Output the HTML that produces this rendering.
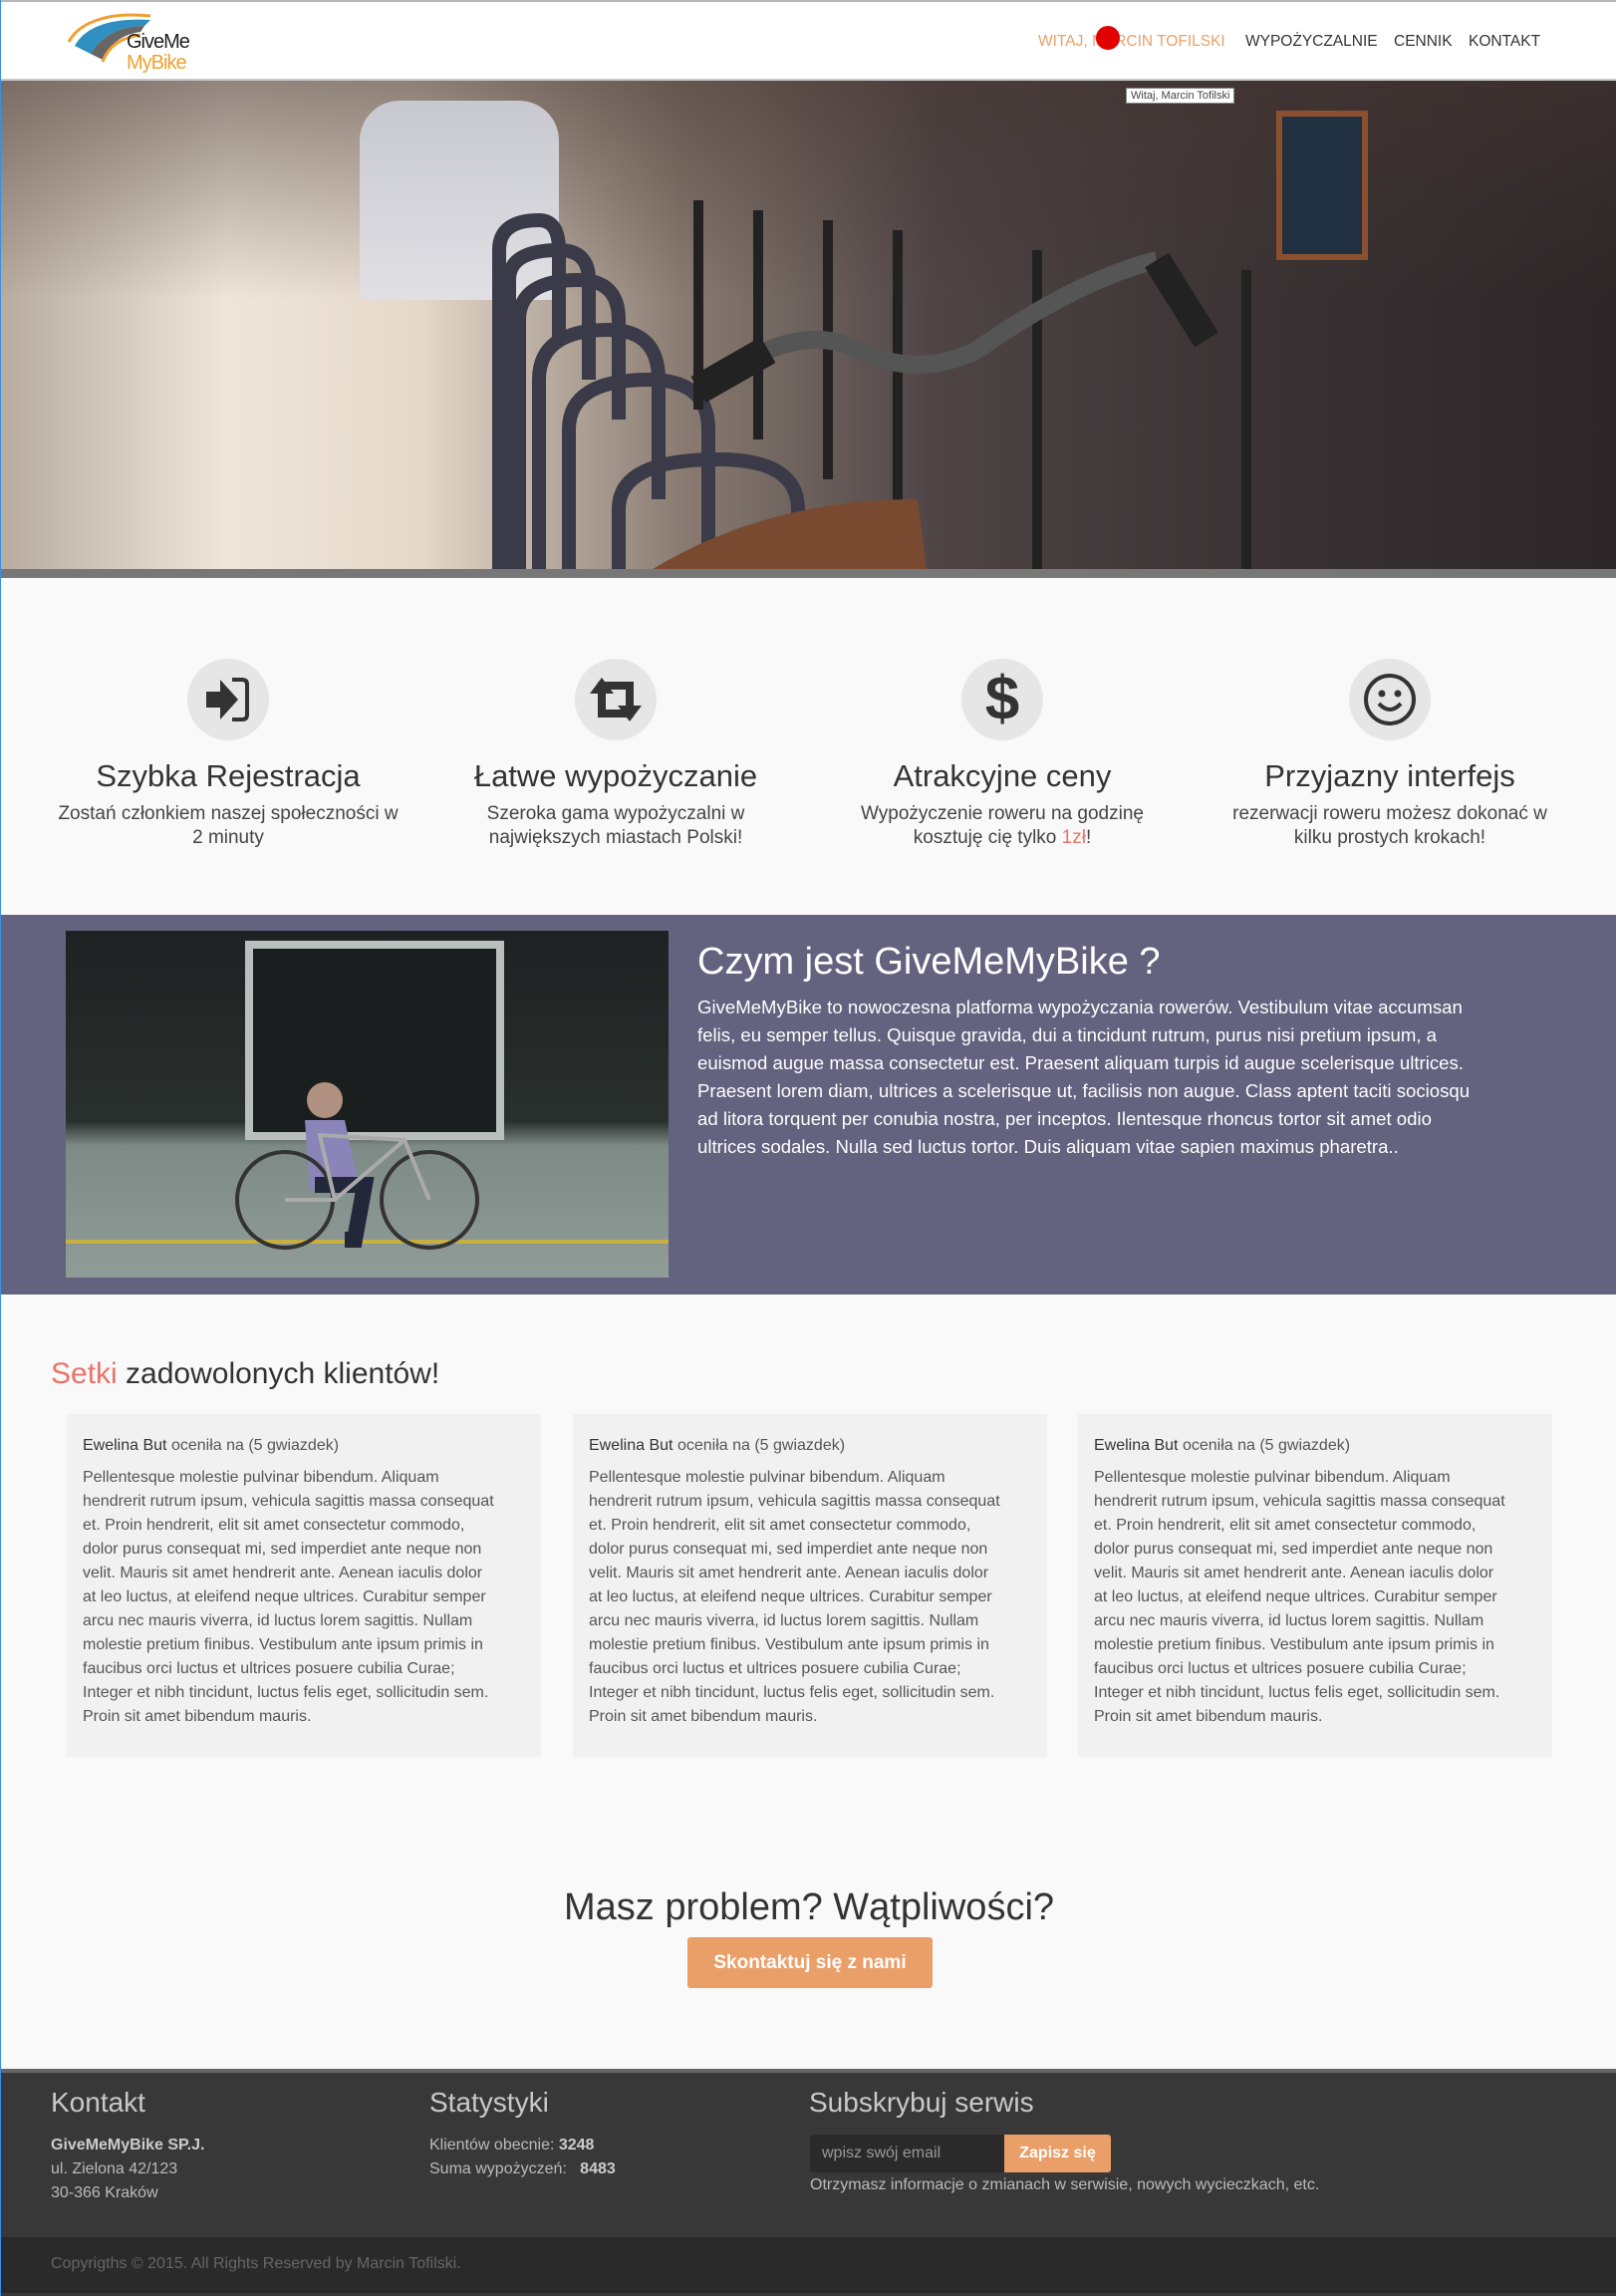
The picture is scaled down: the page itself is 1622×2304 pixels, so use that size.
<!DOCTYPE html>
<html><head><meta charset="utf-8">
<style>
*{margin:0;padding:0;box-sizing:border-box}
html,body{width:1622px;height:2304px;overflow:hidden}
body{background:#f9f9f9;font-family:"Liberation Sans",sans-serif;color:#333;position:relative;border-left:1px solid #3a8ee6}
.abs{position:absolute}
.nw{white-space:nowrap}
#hdr{left:0;top:0;width:1622px;height:81px;background:#fff;border-top:2px solid #b8b8b8;border-bottom:2px solid #c8c8c8}
.nav{top:31px;font-size:15.5px;color:#333;white-space:nowrap}
.feat{width:380px;text-align:center}
.feat h3{font-weight:normal;font-size:31px;color:#333;margin-bottom:8px}
.feat p{font-size:19px;line-height:24px;color:#444}
.circ{width:82px;height:82px;border-radius:50%;background:#e6e6e6}
.card{top:1419px;width:476px;height:344px;background:#f1f1f1;padding:20px 16px;font-size:16px;color:#555;line-height:24px;white-space:nowrap}
.card b{font-weight:normal;color:#333}
.fh{top:2094px;font-size:28px;color:#c9c9c9;font-weight:normal}
.ft{font-size:16px;line-height:24px;color:#bbb;white-space:nowrap}
</style></head><body>

<div id="hdr" class="abs">
  <svg class="abs" style="left:64px;top:6px" width="130" height="68" viewBox="0 0 130 68">
    <path d="M4 34 C16 12 48 4 86 8" stroke="#f0a030" stroke-width="3" fill="none"/>
    <path d="M10 38 C22 16 52 10 86 12 L80 18 C58 18 38 26 26 46 Z" fill="#2e8fc0"/>
    <path d="M26 46 C38 26 58 18 80 18 L76 24 C60 26 46 34 38 52 Z" fill="#666"/>
    <path d="M38 54 C44 38 56 30 76 27" stroke="#f0a030" stroke-width="3" fill="none"/>
    <text x="62" y="40" font-family="Liberation Sans" font-size="20" fill="#222" letter-spacing="-1">GiveMe</text>
    <text x="62" y="61" font-family="Liberation Sans" font-size="20" fill="#f0a030" letter-spacing="-1">MyBike</text>
  </svg>
  <div class="abs nav" style="left:1041px;color:#eb9f68">WITAJ, MARCIN TOFILSKI</div>
  <div class="abs" style="left:1099px;top:24px;width:24px;height:24px;border-radius:50%;background:#e00000"></div>
  <div class="abs nav" style="left:1249px">WYPOŻYCZALNIE</div>
  <div class="abs nav" style="left:1398px">CENNIK</div>
  <div class="abs nav" style="left:1473px">KONTAKT</div>
</div>

<!-- hero -->
<div class="abs" style="left:0;top:81px;width:1622px;height:499px;overflow:hidden;background:linear-gradient(90deg,#b8aca0 0%,#efe6da 14%,#e4d8ca 26%,#8a7c72 42%,#4e4446 58%,#3a3234 78%,#2c2628 100%)">
  <div class="abs" style="left:0;top:0;width:1622px;height:220px;background:linear-gradient(180deg,rgba(70,55,50,.55),rgba(0,0,0,0))"></div>
  <div class="abs" style="left:360px;top:20px;width:200px;height:200px;background:linear-gradient(180deg,#c8c8d0,#e0e0e4);border-radius:40px 40px 10px 10px"></div>
  <div class="abs" style="left:1280px;top:30px;width:92px;height:150px;background:#203040;border:6px solid #8a5030"></div>
  <svg class="abs" style="left:0;top:0" width="1622" height="499">
    <g fill="none" stroke="#3a3a48" stroke-width="14">
      <path d="M500 499 V170 Q500 140 540 140 Q560 140 560 170 V260"/>
      <path d="M510 499 V200 Q510 170 560 170 Q590 170 590 200 V300"/>
      <path d="M520 499 V240 Q520 200 580 200 Q620 200 620 240 V340"/>
      <path d="M540 499 V300 Q540 250 610 250 Q660 250 660 300 V420"/>
      <path d="M570 499 V350 Q570 300 650 300 Q710 300 710 350 V499"/>
      <path d="M620 499 V430 Q620 380 720 380 Q800 380 800 430 V499"/>
    </g>
    <g stroke="#222" stroke-width="10">
      <line x1="700" y1="120" x2="700" y2="330"/><line x1="760" y1="130" x2="760" y2="360"/>
      <line x1="830" y1="140" x2="830" y2="400"/><line x1="900" y1="150" x2="900" y2="440"/>
      <line x1="1040" y1="170" x2="1040" y2="499"/><line x1="1250" y1="190" x2="1250" y2="499"/>
    </g>
    <path d="M720 300 Q800 240 860 270 Q920 300 980 270 Q1080 200 1160 180" stroke="#555" stroke-width="18" fill="none"/>
    <path d="M700 310 L770 270" stroke="#222" stroke-width="30"/>
    <path d="M1160 180 L1210 260" stroke="#222" stroke-width="28"/>
    <path d="M640 499 Q760 420 920 420 L930 499 Z" fill="#7a4a30"/>
  </svg>
  <div class="abs" style="left:0;top:490px;width:1622px;height:9px;background:#777"></div>
</div>
<div class="abs nw" style="left:1129px;top:88px;height:16px;padding:0 4px;font-size:11px;line-height:14px;color:#444;background:#fff;border:1px solid #888">Witaj, Marcin Tofilski</div>

<!-- features -->
<div class="abs circ" style="left:187px;top:661px"></div>
<svg class="abs" style="left:198px;top:672px" width="60" height="60" viewBox="0 0 60 60"><path d="M8 22 H22 V10 L40 30 L22 50 V38 H8 Z" fill="#333"/><path d="M34 10 H44 Q49 10 49 15 V45 Q49 50 44 50 H34" stroke="#333" stroke-width="4" fill="none"/></svg>
<div class="abs circ" style="left:576px;top:661px"></div>
<svg class="abs" style="left:587px;top:672px" width="60" height="60" viewBox="0 0 60 60"><path d="M12 48 V24 H4 L16 8 L28 24 H20 V40 H40 L48 48 Z" fill="#333"/><path d="M48 12 V36 H56 L44 52 L32 36 H40 V20 H20 L12 12 Z" fill="#333"/></svg>
<div class="abs circ" style="left:964px;top:661px"></div>
<div class="abs" style="left:964px;top:661px;width:82px;height:82px;text-align:center;font-size:62px;line-height:82px;color:#333;font-weight:bold">$</div>
<div class="abs circ" style="left:1353px;top:661px"></div>
<svg class="abs" style="left:1364px;top:672px" width="60" height="60" viewBox="0 0 60 60"><circle cx="30" cy="30" r="24" stroke="#333" stroke-width="4" fill="none"/><circle cx="22" cy="24" r="3.5" fill="#333"/><circle cx="38" cy="24" r="3.5" fill="#333"/><path d="M19 34 Q30 46 41 34" stroke="#333" stroke-width="4" fill="none"/></svg>

<div class="abs feat" style="left:38px;top:761px"><h3>Szybka Rejestracja</h3><p>Zostań członkiem naszej społeczności w<br>2 minuty</p></div>
<div class="abs feat" style="left:427px;top:761px"><h3>Łatwe wypożyczanie</h3><p>Szeroka gama wypożyczalni w<br>największych miastach Polski!</p></div>
<div class="abs feat" style="left:815px;top:761px"><h3>Atrakcyjne ceny</h3><p>Wypożyczenie roweru na godzinę<br>kosztuję cię tylko <span style="color:#e8746a">1zł</span>!</p></div>
<div class="abs feat" style="left:1204px;top:761px"><h3>Przyjazny interfejs</h3><p>rezerwacji roweru możesz dokonać w<br>kilku prostych krokach!</p></div>

<!-- purple -->
<div class="abs" style="left:0;top:918px;width:1622px;height:381px;background:#63627f"></div>
<div class="abs" style="left:65px;top:934px;width:605px;height:348px;overflow:hidden;background:linear-gradient(180deg,#1e2222 0%,#2a302e 55%,#7d8a86 62%,#8f9c98 100%)">
  <div class="abs" style="left:180px;top:10px;width:260px;height:200px;background:#1a1e1e;border:8px solid #b8bfbc"></div>
  <div class="abs" style="left:0;top:310px;width:605px;height:4px;background:#c8b040"></div>
  <svg class="abs" style="left:160px;top:40px" width="320" height="300"><circle cx="100" cy="130" r="18" fill="#b09080"/><path d="M80 150 L120 150 L135 220 L85 220 Z" fill="#8a84b8"/><path d="M90 215 L140 215 L130 270 L120 270" stroke="#22283a" stroke-width="16" fill="none"/><circle cx="60" cy="230" r="48" stroke="#333" stroke-width="4" fill="none"/><circle cx="205" cy="230" r="48" stroke="#333" stroke-width="4" fill="none"/><path d="M60 230 L110 230 L180 170 L205 230 M110 230 L95 165 L180 170" stroke="#aaa" stroke-width="4" fill="none"/></svg>
</div>
<div class="abs nw" style="left:699px;top:944px;font-size:38px;color:#fff">Czym jest GiveMeMyBike ?</div>
<div class="abs nw" style="left:699px;top:997px;font-size:18.6px;line-height:28px;color:#fff">GiveMeMyBike to nowoczesna platforma wypożyczania rowerów. Vestibulum vitae accumsan<br>felis, eu semper tellus. Quisque gravida, dui a tincidunt rutrum, purus nisi pretium ipsum, a<br>euismod augue massa consectetur est. Praesent aliquam turpis id augue scelerisque ultrices.<br>Praesent lorem diam, ultrices a scelerisque ut, facilisis non augue. Class aptent taciti sociosqu<br>ad litora torquent per conubia nostra, per inceptos. Ilentesque rhoncus tortor sit amet odio<br>ultrices sodales. Nulla sed luctus tortor. Duis aliquam vitae sapien maximus pharetra..</div>

<!-- clients -->
<div class="abs nw" style="left:50px;top:1362px;font-size:30px;color:#333"><span style="color:#e8746a">Setki</span> zadowolonych klientów!</div>
<div class="abs card" style="left:66px"><b>Ewelina But</b> oceniła na (5 gwiazdek)<div style="margin-top:8px">Pellentesque molestie pulvinar bibendum. Aliquam<br>hendrerit rutrum ipsum, vehicula sagittis massa consequat<br>et. Proin hendrerit, elit sit amet consectetur commodo,<br>dolor purus consequat mi, sed imperdiet ante neque non<br>velit. Mauris sit amet hendrerit ante. Aenean iaculis dolor<br>at leo luctus, at eleifend neque ultrices. Curabitur semper<br>arcu nec mauris viverra, id luctus lorem sagittis. Nullam<br>molestie pretium finibus. Vestibulum ante ipsum primis in<br>faucibus orci luctus et ultrices posuere cubilia Curae;<br>Integer et nibh tincidunt, luctus felis eget, sollicitudin sem.<br>Proin sit amet bibendum mauris.</div></div>
<div class="abs card" style="left:574px"><b>Ewelina But</b> oceniła na (5 gwiazdek)<div style="margin-top:8px">Pellentesque molestie pulvinar bibendum. Aliquam<br>hendrerit rutrum ipsum, vehicula sagittis massa consequat<br>et. Proin hendrerit, elit sit amet consectetur commodo,<br>dolor purus consequat mi, sed imperdiet ante neque non<br>velit. Mauris sit amet hendrerit ante. Aenean iaculis dolor<br>at leo luctus, at eleifend neque ultrices. Curabitur semper<br>arcu nec mauris viverra, id luctus lorem sagittis. Nullam<br>molestie pretium finibus. Vestibulum ante ipsum primis in<br>faucibus orci luctus et ultrices posuere cubilia Curae;<br>Integer et nibh tincidunt, luctus felis eget, sollicitudin sem.<br>Proin sit amet bibendum mauris.</div></div>
<div class="abs card" style="left:1081px"><b>Ewelina But</b> oceniła na (5 gwiazdek)<div style="margin-top:8px">Pellentesque molestie pulvinar bibendum. Aliquam<br>hendrerit rutrum ipsum, vehicula sagittis massa consequat<br>et. Proin hendrerit, elit sit amet consectetur commodo,<br>dolor purus consequat mi, sed imperdiet ante neque non<br>velit. Mauris sit amet hendrerit ante. Aenean iaculis dolor<br>at leo luctus, at eleifend neque ultrices. Curabitur semper<br>arcu nec mauris viverra, id luctus lorem sagittis. Nullam<br>molestie pretium finibus. Vestibulum ante ipsum primis in<br>faucibus orci luctus et ultrices posuere cubilia Curae;<br>Integer et nibh tincidunt, luctus felis eget, sollicitudin sem.<br>Proin sit amet bibendum mauris.</div></div>

<!-- CTA -->
<div class="abs nw" style="left:0;width:1622px;top:1893px;text-align:center;font-size:38px;color:#333">Masz problem? Wątpliwości?</div>
<div class="abs nw" style="left:689px;top:1944px;width:246px;height:51px;background:#eb9f68;border-radius:3px;color:#fff;font-size:19px;font-weight:bold;text-align:center;line-height:51px">Skontaktuj się z nami</div>

<!-- footer -->
<div class="abs" style="left:0;top:2076px;width:1622px;height:228px;background:#383838;border-top:4px solid #666"></div>
<div class="abs fh nw" style="left:50px">Kontakt</div>
<div class="abs fh nw" style="left:430px">Statystyki</div>
<div class="abs fh nw" style="left:811px">Subskrybuj serwis</div>
<div class="abs ft" style="left:50px;top:2141px"><b style="color:#ccc">GiveMeMyBike SP.J.</b><br>ul. Zielona 42/123<br>30-366 Kraków</div>
<div class="abs ft" style="left:430px;top:2141px">Klientów obecnie: <b style="color:#ccc">3248</b><br>Suma wypożyczeń:&nbsp;&nbsp; <b style="color:#ccc">8483</b></div>
<div class="abs" style="left:812px;top:2142px;width:195px;height:38px;background:#2a2a2a;border-radius:3px 0 0 3px;color:#999;font-size:16px;line-height:38px;padding-left:12px">wpisz swój email</div>
<div class="abs nw" style="left:1007px;top:2142px;width:107px;height:38px;background:#eb9f68;border-radius:0 3px 3px 0;color:#fff;font-size:16px;font-weight:bold;line-height:38px;text-align:center">Zapisz się</div>
<div class="abs ft" style="left:812px;top:2181px;font-size:16px">Otrzymasz informacje o zmianach w serwisie, nowych wycieczkach, etc.</div>
<div class="abs" style="left:0;top:2245px;width:1622px;height:56px;background:#2a2a2a"></div>
<div class="abs nw" style="left:50px;top:2263px;font-size:16px;color:#666">Copyrigths © 2015. All Rights Reserved by Marcin Tofilski.</div>
</body></html>
